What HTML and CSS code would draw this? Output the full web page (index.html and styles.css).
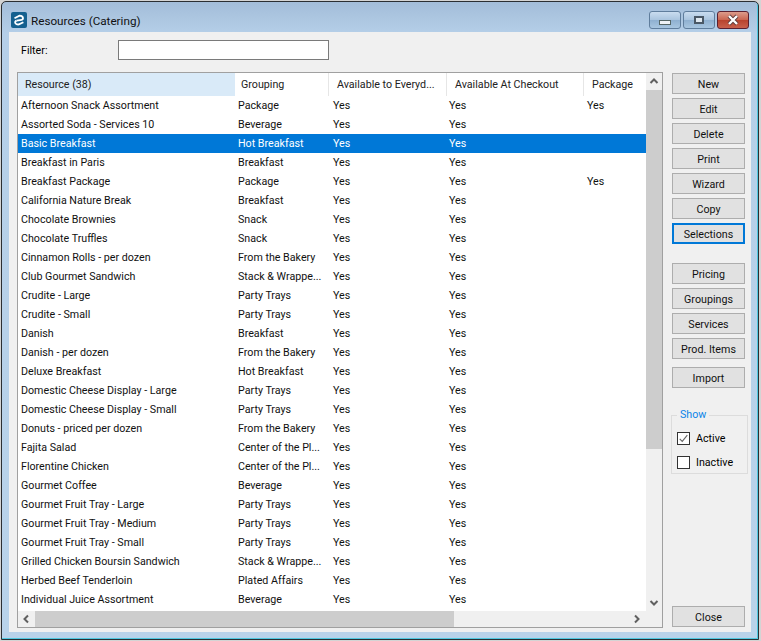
FILE: index.html
```html
<!DOCTYPE html>
<html lang="en">
<head>
    <meta charset="UTF-8">
    <title>Resources (Catering)</title>
    <link rel="stylesheet" href="styles.css">
</head>
<body>
    <div class="window">
        <div class="titlebar">
            <svg class="app-icon" width="16" height="16" viewBox="0 0 16 16">
                <rect width="16" height="16" rx="2" fill="#14608f"/>
                <path d="M3.5 6.2 L8.5 3.6 Q12 3.6 12 6.2 Q12 8 9 8.2 L5.5 8.6" fill="none" stroke="#fff" stroke-width="1.8"/>
                <path d="M5.5 8.6 Q3.6 9.6 4.4 11.2 Q5.6 12.8 8 12.4 L12.4 10.2" fill="none" stroke="#fff" stroke-width="1.8"/>
            </svg>
            <span class="title">Resources (Catering)</span>
            <div class="controls">
                <div class="ctl"><span class="ctl-min"></span></div>
                <div class="ctl"><span class="ctl-max"></span></div>
                <div class="ctl ctl-close">
                    <svg width="16" height="12" viewBox="0 0 16 12">
                        <path d="M4 2 L12 10 M12 2 L4 10" stroke="#5b3a3a" stroke-width="4"/>
                        <path d="M4 2 L12 10 M12 2 L4 10" stroke="#fff" stroke-width="2.4"/>
                    </svg>
                </div>
            </div>
        </div>
        <div class="client">
            <div class="filter-row">
                <label class="filter-label">Filter:</label>
                <input class="filter-input" type="text">
            </div>
            <div class="main">
                <div class="grid">
                    <div class="grid-top">
                        <div class="grid-body">
                            <div class="row head">
                                <div class="sorted">Resource (38)</div>
                                <div>Grouping</div>
                                <div>Available to Everyd...</div>
                                <div>Available At Checkout</div>
                                <div>Package</div>
                            </div>
                            <div id="rows"></div>
                        </div>
                        <div class="vscroll">
                            <svg class="arrow-v" width="16" height="17" viewBox="0 0 16 17"><path d="M4.5 10 L8 6.5 L11.5 10" fill="none" stroke="#606060" stroke-width="2"/></svg>
                            <div class="v-thumb"></div>
                            <svg class="arrow-v" width="16" height="17" viewBox="0 0 16 17"><path d="M4.5 7 L8 10.5 L11.5 7" fill="none" stroke="#606060" stroke-width="2"/></svg>
                        </div>
                    </div>
                    <div class="hscroll">
                        <svg class="arrow-h" width="17" height="16" viewBox="0 0 17 16"><path d="M10 4.5 L6.5 8 L10 11.5" fill="none" stroke="#606060" stroke-width="2"/></svg>
                        <div class="h-thumb"></div>
                        <svg class="arrow-h" width="17" height="16" viewBox="0 0 17 16"><path d="M7 4.5 L10.5 8 L7 11.5" fill="none" stroke="#606060" stroke-width="2"/></svg>
                    </div>
                </div>
                <div class="side">
                    <div class="btn-group">
                        <button>New</button>
                        <button>Edit</button>
                        <button>Delete</button>
                        <button>Print</button>
                        <button>Wizard</button>
                        <button>Copy</button>
                        <button class="focused">Selections</button>
                    </div>
                    <div class="btn-group second">
                        <button>Pricing</button>
                        <button>Groupings</button>
                        <button>Services</button>
                        <button>Prod. Items</button>
                    </div>
                    <button class="import">Import</button>
                    <fieldset class="show">
                        <legend>Show</legend>
                        <div class="check">
                            <span class="box">
                                <svg width="13" height="13" viewBox="0 0 13 13"><path d="M2 7 L5 10 L11 2.5" fill="none" stroke="#666" stroke-width="1.3"/></svg>
                            </span>
                            Active
                        </div>
                        <div class="check">
                            <span class="box"></span>
                            Inactive
                        </div>
                    </fieldset>
                    <button class="close">Close</button>
                </div>
            </div>
        </div>
    </div>
    <script>
        const data = [
            ["Afternoon Snack Assortment", "Package", "Yes"],
            ["Assorted Soda - Services 10", "Beverage"],
            ["Basic Breakfast", "Hot Breakfast"],
            ["Breakfast in Paris", "Breakfast"],
            ["Breakfast Package", "Package", "Yes"],
            ["California Nature Break", "Breakfast"],
            ["Chocolate Brownies", "Snack"],
            ["Chocolate Truffles", "Snack"],
            ["Cinnamon Rolls - per dozen", "From the Bakery"],
            ["Club Gourmet Sandwich", "Stack &amp; Wrappe..."],
            ["Crudite - Large", "Party Trays"],
            ["Crudite - Small", "Party Trays"],
            ["Danish", "Breakfast"],
            ["Danish - per dozen", "From the Bakery"],
            ["Deluxe Breakfast", "Hot Breakfast"],
            ["Domestic Cheese Display - Large", "Party Trays"],
            ["Domestic Cheese Display - Small", "Party Trays"],
            ["Donuts - priced per dozen", "From the Bakery"],
            ["Fajita Salad", "Center of the Pl..."],
            ["Florentine Chicken", "Center of the Pl..."],
            ["Gourmet Coffee", "Beverage"],
            ["Gourmet Fruit Tray - Large", "Party Trays"],
            ["Gourmet Fruit Tray - Medium", "Party Trays"],
            ["Gourmet Fruit Tray - Small", "Party Trays"],
            ["Grilled Chicken Boursin Sandwich", "Stack &amp; Wrappe..."],
            ["Herbed Beef Tenderloin", "Plated Affairs"],
            ["Individual Juice Assortment", "Beverage"]
        ];
        const rows = document.getElementById("rows");
        data.forEach((entry, i) => {
            const cls = i === 2 ? "row selected" : "row";
            rows.innerHTML += `<div class="${cls}"><div>${entry[0]}</div><div>${entry[1]}</div><div>Yes</div><div>Yes</div><div>${entry[2] || ""}</div></div>`;
        });
    </script>
</body>
</html>
```
FILE: styles.css
```css
* {
    box-sizing: border-box;
}
html, body {
    margin: 0;
    height: 100%;
}
body {
    font-family: Roboto, "Noto Sans", sans-serif;
    font-size: 10.7px;
    color: #000;
    background: #d4d4d4;
    overflow: hidden;
    padding: 1px 0 0 1px;
}
.window {
    display: flex;
    flex-direction: column;
    width: 758px;
    height: 639px;
    padding: 0 7px 7px 7px;
    border: 1px solid #2b2f33;
    border-radius: 5px 5px 0 0;
    background: linear-gradient(180deg, #a3bdd9 0, #b5cfe8 32px, #b9d3ea 100%);
    box-shadow: inset -1px -1px 0 #4fc8e0;
}

/* title bar */
.titlebar {
    display: flex;
    align-items: center;
    flex: none;
    height: 30px;
    padding-top: 6px;
}
.app-icon {
    flex: none;
    margin-left: 2px;
}
.title {
    margin: 2px 0 0 4px;
    font-size: 11.7px;
    color: #111;
}
.controls {
    display: flex;
    gap: 2px;
    margin-left: auto;
    margin-right: 2px;
}
.ctl {
    display: flex;
    align-items: center;
    justify-content: center;
    width: 32px;
    height: 18px;
    border: 1px solid #5f7d9c;
    border-radius: 3px;
    background: linear-gradient(180deg, #c9dcef 0, #a9c4de 50%, #8fb0d0 52%, #a8c6e0 100%);
}
.ctl-close {
    border-color: #5a2030;
    background: linear-gradient(180deg, #dc9c8c 0, #c9644f 50%, #b8432e 52%, #c8604c 100%);
}
.ctl-min {
    width: 12px;
    height: 5px;
    margin-top: 5px;
    background: #eef2f6;
    border: 1px solid #566;
}
.ctl-max {
    width: 10px;
    height: 8px;
    background: #dfe8f0;
    border: 2px solid #4a5866;
}

/* client area */
.client {
    flex: 1;
    display: flex;
    flex-direction: column;
    min-height: 0;
    background: #f0f0f0;
    padding: 8px 3px 4px 8px;
}
.filter-row {
    display: flex;
    align-items: center;
    height: 20px;
}
.filter-label {
    width: 101px;
    padding-left: 4px;
}
.filter-input {
    width: 211px;
    height: 20px;
    border: 1px solid #7a7a7a;
    background: #fff;
    padding: 0;
}
.main {
    flex: 1;
    display: flex;
    margin-top: 12px;
    min-height: 0;
}

/* resource grid */
.grid {
    display: flex;
    flex-direction: column;
    width: 646px;
    border: 1px solid #a0a0a0;
    background: #f0f0f0;
}
.grid-top {
    display: flex;
    height: 539px;
}
.grid-body {
    width: 628px;
    background: #fff;
    overflow: hidden;
}
.row {
    display: grid;
    grid-template-columns: 217px 93px 118px 137px 62px;
    height: 19px;
    line-height: 19px;
    color: #111;
    white-space: nowrap;
}
.row > div {
    overflow: hidden;
    padding-left: 3px;
}
.row > div:nth-child(3) {
    padding-left: 5px;
}
.row > div:nth-child(5) {
    padding-left: 4px;
}
.head {
    height: 23px;
    line-height: 23px;
    color: #222;
}
.head > div {
    padding-left: 6px;
    border-left: 1px solid #e6e6e6;
}
.head > div:nth-child(3),
.head > div:nth-child(4),
.head > div:nth-child(5) {
    padding-left: 8px;
}
.head > div:nth-child(2) {
    border-left: 0;
}
.head .sorted {
    padding-left: 7px;
    background: #d9eaf8;
    border-left: 0;
}
.selected {
    background: #0078d7;
    color: #fff;
}
.vscroll {
    display: flex;
    flex-direction: column;
    flex: none;
    width: 16px;
}
.arrow-v,
.arrow-h {
    flex: none;
}
.v-thumb {
    height: 359px;
    margin-bottom: auto;
    background: #cdcdcd;
}
.hscroll {
    display: flex;
    align-items: center;
    justify-content: space-between;
    height: 16px;
}
.h-thumb {
    width: 419px;
    height: 100%;
    margin-right: auto;
    background: #cdcdcd;
}
.hscroll .arrow-h:last-child {
    margin-right: 17px;
}

/* side buttons */
.side {
    display: flex;
    flex-direction: column;
    width: 76px;
    margin-left: 9px;
    padding: 1px 0 1px;
}
button {
    display: block;
    flex: none;
    width: 73px;
    height: 21px;
    padding: 1px 0 0;
    font: inherit;
    color: #111;
    background: #e1e1e1;
    border: 1px solid #adadad;
}
.btn-group {
    display: flex;
    flex-direction: column;
    gap: 4px;
}
.btn-group.second {
    margin-top: 19px;
}
.focused {
    border: 2px solid #0078d7;
}
.import {
    margin-top: 8px;
}
.show {
    flex: none;
    width: 77px;
    height: 65px;
    margin: 21px 0 0 -1px;
    padding: 5px 0 0 5px;
    border: 1px solid #dcdcdc;
    min-width: 0;
}
.show legend {
    padding: 0 3px;
    margin-left: 0;
    line-height: 12px;
    color: #0a84e8;
}
.check {
    display: flex;
    align-items: center;
    gap: 6px;
    height: 24px;
}
.box {
    display: flex;
    align-items: center;
    justify-content: center;
    width: 13px;
    height: 13px;
    border: 1px solid #333;
    background: #fff;
}
.close {
    margin-top: auto;
}
```
